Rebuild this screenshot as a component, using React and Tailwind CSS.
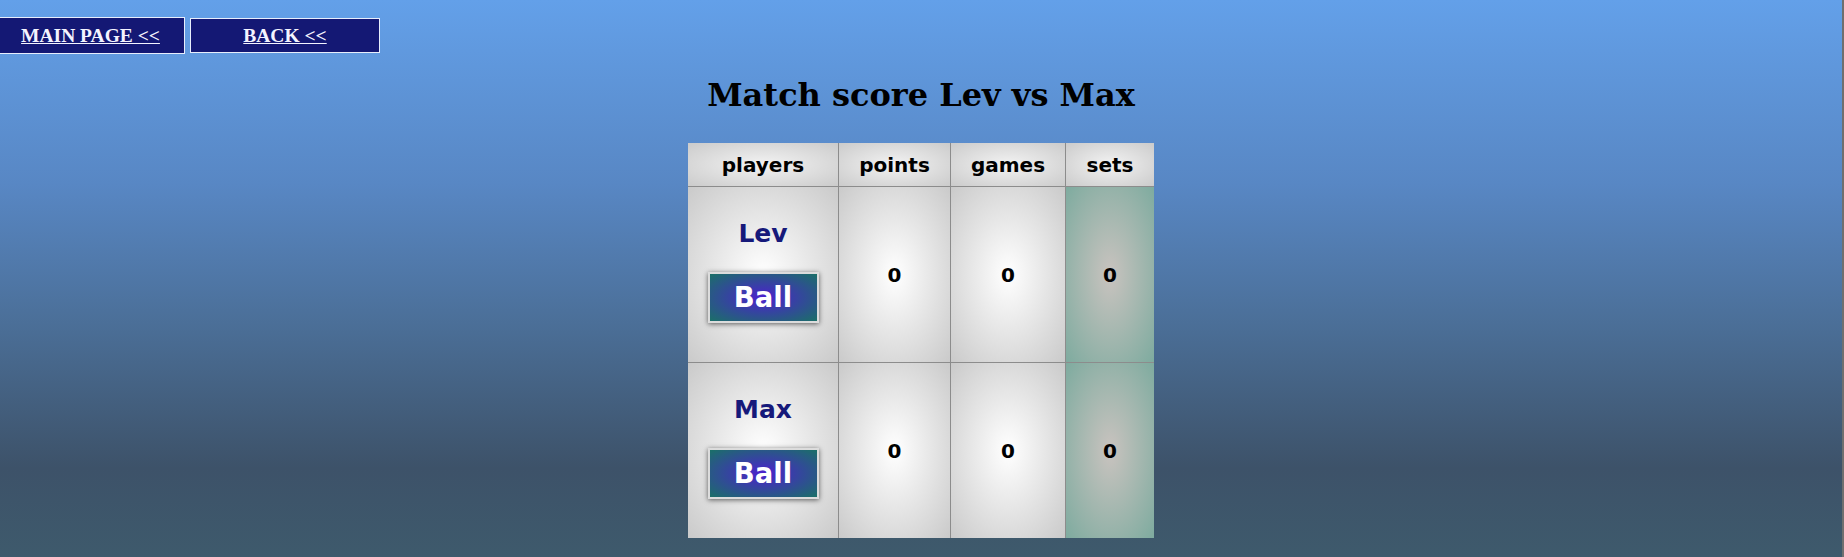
const players = [
  { name: 'Lev', points: 0, games: 0, sets: 0 },
  { name: 'Max', points: 0, games: 0, sets: 0 },
];

const headCell =
  "flex items-center justify-center bg-[radial-gradient(#f3f3f3,#cbcbcb)] text-[20px] font-bold text-black";
const bodyCell =
  "flex items-center justify-center bg-[radial-gradient(#ffffff,#cacaca)] text-[20px] font-bold text-black";
const setsCell =
  "flex items-center justify-center bg-[radial-gradient(#c9c3bf,#7eab9f)] text-[20px] font-bold text-black";

export default function App() {
  return (
    <div className="flex h-[557px] w-full overflow-hidden bg-[linear-gradient(to_bottom,#63a0e9_0%,#5887c4_33%,#4b6f98_58%,#3d5269_84%,#3e5a6c_100%)]">
      <div className="flex-1 min-w-0">
        <nav className="flex items-center gap-[5px] pt-[17px] -ml-1 font-['Liberation_Serif',serif] font-bold text-[19.5px] text-[#f4f4ff]">
          <a
            href="#"
            className="flex h-[37px] w-[189px] items-center justify-center border border-[#e8eefc] bg-[#141874] underline"
          >
            MAIN PAGE &lt;&lt;
          </a>
          <a
            href="#"
            className="flex h-[35px] w-[190px] items-center justify-center border border-[#e8eefc] bg-[#141874] underline"
          >
            BACK &lt;&lt;
          </a>
        </nav>

        <h1 className="mt-[22px] text-center font-['DejaVu_Serif',serif] text-[32px] leading-[38px] font-bold text-black">
          Match score Lev vs Max
        </h1>

        <div className="mx-auto mt-[29px] grid w-[466px] grid-cols-[150px_111px_114px_88px] grid-rows-[43px_175px_175px] gap-px bg-[#8c8c8c] font-['DejaVu_Sans',sans-serif]">
          <div className={headCell}>players</div>
          <div className={headCell}>points</div>
          <div className={headCell}>games</div>
          <div className={headCell}>sets</div>

          {players.map((p) => (
            <div key={p.name} className="contents">
              <div className="flex flex-col items-center justify-center bg-[radial-gradient(#ffffff,#cacaca)] pb-[7px]">
                <span className="text-[25px] leading-[29px] font-bold text-[#16197a]">{p.name}</span>
                <button
                  onClick={() => console.log('ball', p.name)}
                  className="mt-[24px] flex h-[51px] w-[111px] items-center justify-center border-2 border-[#dcdcdc] bg-[radial-gradient(#4c20cf,#1a7067)] text-[27.5px] font-bold text-white shadow-[0_1px_5px_rgba(0,0,0,0.6)]"
                >
                  Ball
                </button>
              </div>
              <div className={bodyCell}>{p.points}</div>
              <div className={bodyCell}>{p.games}</div>
              <div className={setsCell}>{p.sets}</div>
            </div>
          ))}
        </div>
      </div>
      <div className="w-[2px] shrink-0 bg-[#6f6f6f]" />
    </div>
  );
}
